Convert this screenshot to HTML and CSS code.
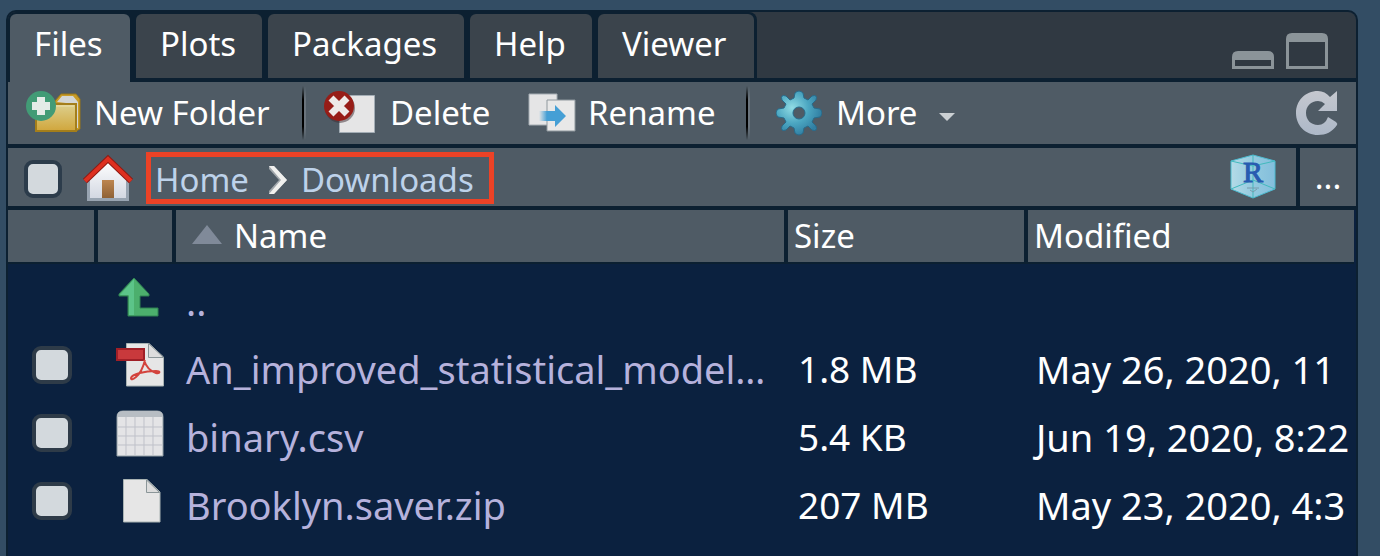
FILE: index.html
```html
<!DOCTYPE html>
<html lang="en">
<head>
<meta charset="utf-8">
<title>Files</title>
<link rel="stylesheet" href="styles.css">
</head>
<body>
<main class="pane">
  <header class="tabstrip">
    <nav class="tabs" role="tablist">
      <button class="tab tab-files active" role="tab" aria-selected="true">Files</button>
      <button class="tab tab-plots" role="tab">Plots</button>
      <button class="tab tab-packages" role="tab">Packages</button>
      <button class="tab tab-help" role="tab">Help</button>
      <button class="tab tab-viewer" role="tab">Viewer</button>
    </nav>
    <div class="window-buttons">
      <button class="icon-button" aria-label="Minimize"><svg width="42" height="38" viewBox="0 0 42 38"><path fill="#8b9499" fill-rule="evenodd" d="M0 37V25q0-6 6-6h30q6 0 6 6v12zM3 28v6h36v-6z"/></svg></button>
      <button class="icon-button" aria-label="Maximize"><svg width="42" height="38" viewBox="0 0 42 38"><path fill="#8b9499" fill-rule="evenodd" d="M0 37V7q0-6 6-6h30q6 0 6 6v30zM3 10v24h36V10z"/></svg></button>
    </div>
  </header>

  <div class="toolbar" role="toolbar">
    <button class="tool tool-new">
      <svg width="56" height="44" viewBox="0 0 56 44">
        <defs><linearGradient id="fold" x2="0" y2="1"><stop stop-color="#ddd08e"/><stop offset="1" stop-color="#d0a63c"/></linearGradient></defs>
        <path fill="#c99c28" stroke="#9a7718" d="M29 10l6-7h15l4 5v30l-4 2H29z"/>
        <path fill="#d4d6d4" d="M31 11l5-6h11l5 6v26h-3V13z"/>
        <path fill="url(#fold)" stroke="#a47e1b" stroke-width="2" d="M10 13h40v27H10z"/>
        <path fill="none" stroke="#eadfae" d="M30 15h18"/>
        <circle cx="15" cy="15" r="15" fill="#429b76"/>
        <path fill="#e4ebe7" d="M11 6h8v5h5v8h-5v5h-8v-5H6v-8h5z"/>
      </svg><span>New Folder</span></button>
    <span class="divider"></span>
    <button class="tool tool-delete">
      <svg width="52" height="44" viewBox="0 0 52 44">
        <path fill="#e5e5e6" stroke="#a3adb5" d="M15.500 4.500h35v37h-35z"/>
        <circle cx="16" cy="17" r="15" fill="#3b2b31" opacity=".5"/>
        <circle cx="15" cy="15" r="15" fill="#971d17"/>
        <path stroke="#eeeae8" stroke-width="7" d="M7 7l16 16M23 7L7 23"/>
      </svg><span>Delete</span></button>
    <button class="tool tool-rename">
      <svg width="48" height="40" viewBox="0 0 48 40">
        <defs><linearGradient id="arr"><stop stop-color="#4aa3d7" stop-opacity="0"/><stop offset=".3" stop-color="#459fd5"/></linearGradient></defs>
        <path fill="#e5e5e6" stroke="#a5adb3" d="M1 1h28v31H1z"/>
        <path fill="#e8e8e8" stroke="#8f989e" d="M19 7h28v31H19z"/>
        <path fill="url(#arr)" d="M11 18h16v-6l11 11-11 11v-6H11z"/>
      </svg><span>Rename</span></button>
    <span class="divider"></span>
    <button class="tool tool-more">
      <svg width="46" height="46" viewBox="0 0 46 46">
        <defs><radialGradient id="gear" cx=".35" cy=".38" r=".65"><stop stop-color="#91dce4"/><stop offset=".55" stop-color="#4ba6c1"/><stop offset="1" stop-color="#317fa3"/></radialGradient></defs>
        <path fill="url(#gear)" fill-rule="evenodd" stroke="#286b8a" stroke-linejoin="round" d="M19 3Q23-1 27 3L28 8L32 10L36 6Q42 4 40 10L36 14L38 18L44 19Q48 23 44 27L38 28L36 32L40 36Q42 42 36 40L32 36L28 38L27 43Q23 47 19 43L18 38L14 36L10 40Q4 42 6 36L10 32L8 28L2 27Q-2 23 2 19L8 18L10 14L6 10Q4 4 10 6L14 10L18 8ZM23 17a6 6 0 1 0 0 12 6 6 0 0 0 0-12z"/>
      </svg><span>More</span>
      <svg class="caret" width="16" height="10" viewBox="0 0 16 10"><path fill="#cbd0d3" d="M0 1h16L8 9z"/></svg></button>
    <button class="icon-button refresh" aria-label="Refresh">
      <svg width="42" height="46" viewBox="0 0 42 46">
        <defs><linearGradient id="ref" x2="0" y2="1"><stop stop-color="#c5c8cf"/><stop offset="1" stop-color="#adb8c8"/></linearGradient></defs>
        <path fill="url(#ref)" d="M34 7l7-6v20H22l7-7Q26 11 22 11C15 11 10 16 10 23s5 12 12 12q7 0 10-8l8 5q2 2 1 3C36 42 30 45 22 45 9 45 0 35 0 23S9 1 22 1q7 0 12 6z"/>
      </svg></button>
  </div>

  <div class="pathbar">
    <input class="check" type="checkbox" aria-label="Select all files">
    <button class="icon-button home" aria-label="Go to home directory">
      <svg width="52" height="48" viewBox="0 0 52 48">
        <defs><linearGradient id="wall" x2="0" y2="1"><stop stop-color="#fff"/><stop offset="1" stop-color="#d3d8e2"/></linearGradient><linearGradient id="door" x2="0" y2="1"><stop stop-color="#bd8650"/><stop offset="1" stop-color="#8f6236"/></linearGradient></defs>
        <path fill="#98a4b1" d="M5 26L26 6l21 20v21H5z"/>
        <path fill="url(#wall)" d="M8 25L26 7l18 18v19H8z"/>
        <path fill="url(#door)" d="M20 26h12v18H20z"/>
        <path fill="none" stroke="#8f1b14" stroke-width="6" d="M3 27L26 5l23 22"/>
        <path fill="none" stroke="#de3020" stroke-width="4" d="M3 27L26 5l23 22"/>
      </svg></button>
    <nav class="crumbs" aria-label="Path">
      <a href="#home">Home</a>
      <svg width="18" height="28" viewBox="0 0 18 28"><path fill="#a0a6ab" d="M0 0h5l13 14L5 28H0v-3l10-11L0 3z"/><path fill="#f0f0ee" d="M0 0h5l13 14L5 28H0l12-14z"/></svg>
      <a href="#downloads">Downloads</a>
    </nav>
    <button class="icon-button project" aria-label="Go to project directory">
      <svg width="46" height="46" viewBox="0 0 46 46">
        <defs><linearGradient id="cube"><stop stop-color="#b4dbe7"/><stop offset=".5" stop-color="#94cadf"/><stop offset="1" stop-color="#83bedc"/></linearGradient></defs>
        <path fill="url(#cube)" stroke="#4dbbd0" stroke-linejoin="round" d="M23 1l22 6v28L23 44 1 35V7z"/>
        <path fill="none" stroke="#42b9bd" d="M23 1v43M1 7l22 5 22-5M1 35l22-9 22 9"/>
        <path fill="none" stroke="#769cac" d="M17 34h12M20 36l3 2 4-3"/>
        <text class="cube-letter" x="23" y="28" text-anchor="middle">R</text>
      </svg></button>
    <button class="browse" aria-label="Go to directory">...</button>
  </div>

  <table class="files">
    <colgroup><col class="c-check"><col class="c-icon"><col><col class="c-size"><col class="c-date"></colgroup>
    <thead>
      <tr><th></th><th></th>
        <th class="h-name"><svg width="30" height="20" viewBox="0 0 30 20"><path fill="#808a99" d="M15 0l15 19H0z"/></svg>Name</th>
        <th>Size</th><th>Modified</th></tr>
    </thead>
    <tbody>
      <tr>
        <td></td>
        <td class="icon"><svg width="48" height="48" viewBox="0 0 48 48"><path fill="#4caf6d" stroke="#2f8153" d="M3 20L18 4l15 16v2h-9v12h18v8H12V22H3z"/><path fill="#5cc489" d="M4 21L18 5v36h-5V21z"/></svg></td>
        <td class="name"><a href="#up">..</a></td><td></td><td></td>
      </tr>
      <tr>
        <td class="pick"><input class="check" type="checkbox" aria-label="Select An_improved_statistical_model"></td>
        <td class="icon"><svg width="48" height="48" viewBox="0 0 48 48"><path fill="#e6e6e6" stroke="#a9b3b3" d="M10.500 1.500H33L47.500 15v29H10.500z"/><path fill="#ddd" stroke="#8b9699" d="M32.500 1.500V15.500h15z"/><path fill="#c9393c" stroke="#a01f27" stroke-width="2" d="M1 7h27v11H1z"/><path fill="none" stroke="#d3433d" stroke-width="2" d="M29 18q-3 12-9 17-5 4-5 1c1-4 14-7 25-7 5 0 4 3 0 2q-9-3-12-13"/></svg></td>
        <td class="name"><a href="#model">An_improved_statistical_model…</a></td><td>1.8 MB</td><td class="date">May 26, 2020, 11</td>
      </tr>
      <tr>
        <td class="pick"><input class="check" type="checkbox" aria-label="Select binary.csv"></td>
        <td class="icon"><svg width="48" height="48" viewBox="0 0 48 48"><path fill="#e4e4e6" stroke="#939fa5" d="M1 46V7q0-6 6-6h34q6 0 6 6v39z"/><path fill="#b7bdc3" d="M1 7q0-6 6-6h34q6 0 6 6z"/><path stroke="#bfc1c9" d="M1 17h46M1 26h46M1 35h46M10 7v38M19 7v38M28 7v38M37 7v38"/></svg></td>
        <td class="name"><a href="#binary">binary.csv</a></td><td>5.4 KB</td><td class="date">Jun 19, 2020, 8:22</td>
      </tr>
      <tr>
        <td class="pick"><input class="check" type="checkbox" aria-label="Select Brooklyn.saver.zip"></td>
        <td class="icon"><svg width="48" height="48" viewBox="0 0 48 48"><path fill="#e6e6e6" stroke="#a9b3b3" d="M7.500 1.500H31L44 14v30H7.500z"/><path fill="#ddd" stroke="#8b9699" d="M30.500 2v12.500h13z"/></svg></td>
        <td class="name"><a href="#brooklyn">Brooklyn.saver.zip</a></td><td>207 MB</td><td class="date">May 23, 2020, 4:3</td>
      </tr>
    </tbody>
  </table>
</main>
</body>
</html>
```
FILE: styles.css
```css
* { box-sizing: border-box; }
body {
  margin: 0;
  padding: 10px 22px 0 6px;
  min-height: 100vh;
  display: flex;
  background: #334d64;
  color: #fff;
  font-family: "Noto Sans", "Open Sans", sans-serif;
  font-size: 33px;
  line-height: 40px;
}
button {
  border: 0;
  padding: 0;
  background: none;
  color: inherit;
  font: inherit;
  white-space: nowrap;
}
svg { display: block; flex: none; }
a { color: inherit; text-decoration: none; }

.pane {
  flex: 1;
  min-width: 0;
  border: 2px solid #0c2031;
  border-bottom: 0;
  border-radius: 10px 10px 0 0;
  background: #0b213f;
  overflow: hidden;
}
.tabstrip {
  display: flex;
  justify-content: space-between;
  height: 70px;
  background: #303942;
  border-bottom: 4px solid #0c2031;
}
.tabs {
  display: flex;
  gap: 6px;
  padding: 2px 3px 0 2px;
  background: #0c2031;
  border-top-right-radius: 8px;
}
.tab {
  padding: 0 0 4px 24px;
  text-align: left;
  background: #3b444c;
  border-radius: 6px 6px 0 0;
}
.tab.active {
  background: #4f5b65;
  margin-bottom: -4px;
  padding-bottom: 8px;
}
.tab-files { width: 120px; }
.tab-plots { width: 126px; }
.tab-packages { width: 196px; }
.tab-help { width: 122px; }
.tab-viewer { width: 156px; }
.window-buttons {
  display: flex;
  gap: 12px;
  padding: 20px 28px 0 0;
  align-items: flex-start;
}

.toolbar {
  display: flex;
  align-items: center;
  height: 66px;
  padding: 0 18px;
  background: #4f5b65;
  border-bottom: 4px solid #0c2031;
}
.tool { display: flex; align-items: center; gap: 12px; }
.tool-new { width: 276px; }
.tool-delete { width: 222px; gap: 14px; padding-left: 18px; }
.tool-rename { width: 218px; }
.tool-more { padding-left: 26px; gap: 14px; }
.divider {
  width: 4px;
  height: 54px;
  background: linear-gradient(90deg, #000 60%, #6a747d 60%);
  mask-image: linear-gradient(transparent, #000 25%, #000 75%, transparent);
}
.caret { margin: 8px 0 0 8px; }
.refresh { margin-left: auto; }

.pathbar {
  display: flex;
  align-items: center;
  height: 62px;
  padding-left: 16px;
  background: #4f5b65;
  border-bottom: 4px solid #0c2031;
}
.check {
  appearance: none;
  display: block;
  flex: none;
  width: 38px;
  height: 38px;
  margin: 0;
  border: 4px solid #2c3c4b;
  border-radius: 9px;
  background: #d3d9dd;
}
.pathbar .check { margin-top: 4px; }
.home { margin: 2px 12px 0 20px; }
.crumbs {
  display: flex;
  align-items: center;
  width: 348px;
  height: 52px;
  margin-top: 2px;
  padding: 4px 0 0 4px;
  border: 5px solid #ec4226;
  color: #bdd2ea;
}
.crumbs svg { margin: 0 14px 0 20px; }
.project { margin: 0 20px 0 auto; }
.browse {
  align-self: stretch;
  width: 60px;
  border-left: 4px solid #0c2031;
}
.cube-letter {
  font: 400 30px "Liberation Serif", serif;
  fill: #285bb0;
  stroke: #285bb0;
}

.files {
  width: calc(100% - 2px);
  table-layout: fixed;
  border-collapse: separate;
  border-spacing: 0;
}
.c-check { width: 90px; }
.c-icon { width: 78px; }
.c-size { width: 240px; }
.c-date { width: 326px; }
th {
  height: 54px;
  padding: 0 6px;
  background: #4f5b65;
  border-right: 4px solid #0c2031;
  border-bottom: 2px solid #0c2031;
  font-weight: 400;
  text-align: left;
}
th:last-child { border-right: 0; }
.h-name svg { display: inline-block; margin: 0 12px 3px 10px; }
td {
  height: 68px;
  padding: 6px 6px 0 10px;
  font-size: 37px;
  line-height: 44px;
  white-space: nowrap;
  overflow: hidden;
}
.name, .date { font-size: 38px; }
.name { color: #b6b2dc; }
.pick { padding: 0 0 2px 24px; }
.pick .check { width: 40px; border-color: #2e3b48; }
.icon { padding: 0 0 0 18px; }
.date {
  padding: 6px 0 0 8px;
  border-right: 6px solid transparent;
}
```
